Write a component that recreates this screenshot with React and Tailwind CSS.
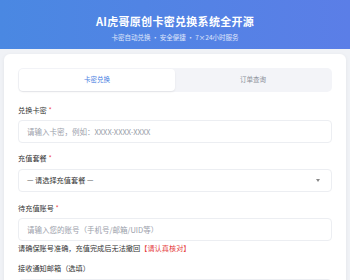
export default function App() {
  const font = { fontFamily: '"Noto Sans CJK SC", "Noto Sans", sans-serif' };
  return (
    <div className="w-[350px] h-[280px] overflow-hidden bg-[#f0f2f6]" style={font}>
      <div className="h-[49px] bg-[linear-gradient(90deg,#4a88e2,#5b7ee7)] flex flex-col items-center pt-[13px]">
        <div className="text-white font-bold text-[11px] leading-[16px] tracking-[0.3px]">AI虎哥原创卡密兑换系统全开源</div>
        <div className="text-white/80 text-[6.5px] leading-[10px] mt-[3px]">卡密自动兑换 · 安全便捷 · 7×24小时服务</div>
      </div>
      <div className="mx-[4px] mt-[5px] bg-white rounded-[6px] shadow-[0_1px_4px_rgba(0,0,0,0.06)] px-[14px] pt-[14px] h-[300px]">
        <div className="flex h-[24px] rounded-[5px] bg-[#f3f4f8] p-[1px]">
          <div className="flex-1 flex items-center justify-center bg-white rounded-[4px] shadow-[0_1px_2px_rgba(0,0,0,0.08)] text-[6.5px] text-[#4a80e2]">卡密兑换</div>
          <div className="flex-1 flex items-center justify-center text-[6.5px] text-[#8a8f99]">订单查询</div>
        </div>

        <div className="mt-[13px] text-[7.2px] leading-[10px] text-[#333]">兑换卡密 <span className="text-[#ef4444]">*</span></div>
        <div className="mt-[5px] h-[23px] rounded-[4px] border border-[#eceef2] flex items-center px-[8px] text-[7.5px] text-[#9aa0aa]">请输入卡密，例如：XXXX-XXXX-XXXX</div>

        <div className="mt-[10px] text-[7.2px] leading-[10px] text-[#333]">充值套餐 <span className="text-[#ef4444]">*</span></div>
        <div className="mt-[6px] h-[23px] rounded-[4px] border border-[#eceef2] flex items-center justify-between pl-[8px] pr-[11px] text-[7.2px] text-[#333]">
          <span>— 请选择充值套餐 —</span>
          <span className="w-0 h-0 border-l-[2.5px] border-r-[2.5px] border-t-[3px] border-l-transparent border-r-transparent border-t-[#888]"></span>
        </div>

        <div className="mt-[11px] text-[7.2px] leading-[10px] text-[#333]">待充值账号 <span className="text-[#ef4444]">*</span></div>
        <div className="mt-[5px] h-[23px] rounded-[4px] border border-[#eceef2] flex items-center px-[8px] text-[7.5px] text-[#9aa0aa]">请输入您的账号（手机号/邮箱/UID等）</div>
        <div className="mt-[2px] text-[7.2px] leading-[10px] text-[#333]">请确保账号准确，充值完成后无法撤回<span className="text-[#e53e3e]">【请认真核对】</span></div>

        <div className="mt-[10px] text-[7.2px] leading-[10px] text-[#333]">接收通知邮箱（选填）</div>
        <div className="mt-[6px] h-[23px] rounded-[4px] border border-[#eceef2]"></div>
      </div>
    </div>
  );
}
